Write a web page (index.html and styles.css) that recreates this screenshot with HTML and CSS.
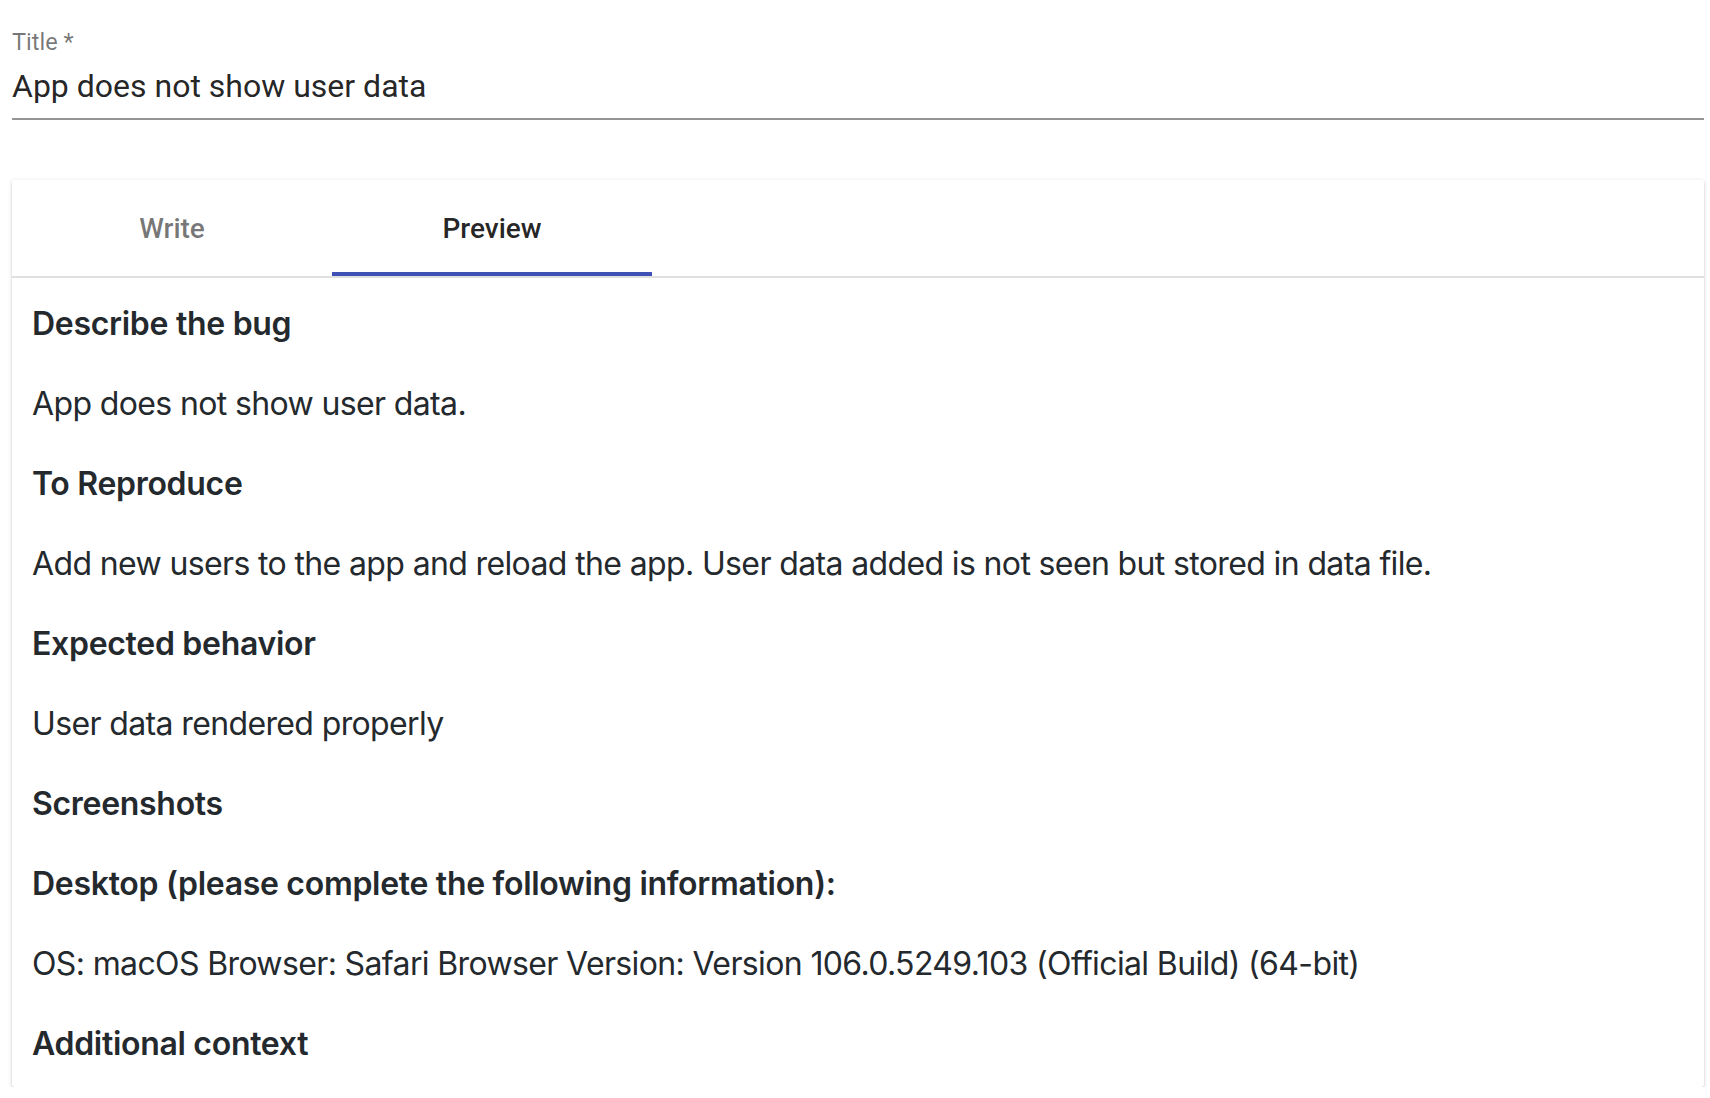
FILE: index.html
```html
<!DOCTYPE html>
<html lang="en">
<head>
<meta charset="utf-8">
<title>Issue</title>
<link rel="stylesheet" href="styles.css">
</head>
<body>
<div class="page">
  <div class="field">
    <label class="field-label">Title *</label>
    <div class="field-input">App does not show user data</div>
  </div>

  <div class="card">
    <div class="tabs">
      <div class="tab">Write</div>
      <div class="tab tab-active">Preview</div>
    </div>
    <div class="markdown">
      <p><strong>Describe the bug</strong></p>
      <p>App does not show user data.</p>
      <p><strong>To Reproduce</strong></p>
      <p>Add new users to the app and reload the app. User data added is not seen but stored in data file.</p>
      <p><strong>Expected behavior</strong></p>
      <p>User data rendered properly</p>
      <p><strong>Screenshots</strong></p>
      <p><strong>Desktop (please complete the following information):</strong></p>
      <p>OS: macOS Browser: Safari Browser Version: Version 106.0.5249.103 (Official Build) (64-bit)</p>
      <p><strong>Additional context</strong></p>
    </div>
  </div>
</div>
</body>
</html>
```

FILE: styles.css
```css
html, body {
  margin: 0;
  padding: 0;
  background: #ffffff;
}

.page {
  padding: 0 6px 0 12px;
}

.field {
  display: flex;
  flex-direction: column;
}

.field-label {
  margin-top: 30px;
  font-family: Roboto, "Liberation Sans", sans-serif;
  font-size: 23.5px;
  line-height: 24px;
  color: rgba(0, 0, 0, 0.54);
}

.field-input {
  margin-top: 13px;
  font-family: Roboto, "Liberation Sans", sans-serif;
  font-size: 32px;
  line-height: 38px;
  color: rgba(0, 0, 0, 0.87);
  padding-bottom: 13px;
  border-bottom: 2px solid #949494;
}

.card {
  margin-top: 60px;
  background: #ffffff;
  border-radius: 2px;
  box-shadow: 0 2px 2px -1px rgba(0, 0, 0, 0.2),
              0 1px 2px 0 rgba(0, 0, 0, 0.14),
              0 1px 5px 0 rgba(0, 0, 0, 0.12);
  height: 907px;
}

.tabs {
  display: flex;
  border-bottom: 2px solid #e0e0e0;
}

.tab {
  width: 320px;
  height: 96px;
  box-sizing: border-box;
  display: flex;
  align-items: center;
  justify-content: center;
  font-family: Roboto, "Liberation Sans", sans-serif;
  font-weight: 500;
  font-size: 28px;
  color: rgba(0, 0, 0, 0.54);
  border-bottom: 4px solid transparent;
  padding-top: 4px;
}

.tab-active {
  color: rgba(0, 0, 0, 0.87);
  border-bottom-color: #3f51b5;
}

.markdown {
  padding: 22px 20px 20px 20px;
  font-family: Inter, "Noto Sans", sans-serif;
  font-size: 32px;
  line-height: 48px;
  letter-spacing: -0.63px;
  color: #24292e;
}

.markdown p {
  margin: 0 0 32px 0;
}

.markdown p:last-child {
  margin-bottom: 0;
}

.markdown strong {
  font-weight: 600;
  letter-spacing: -0.3px;
}
```
